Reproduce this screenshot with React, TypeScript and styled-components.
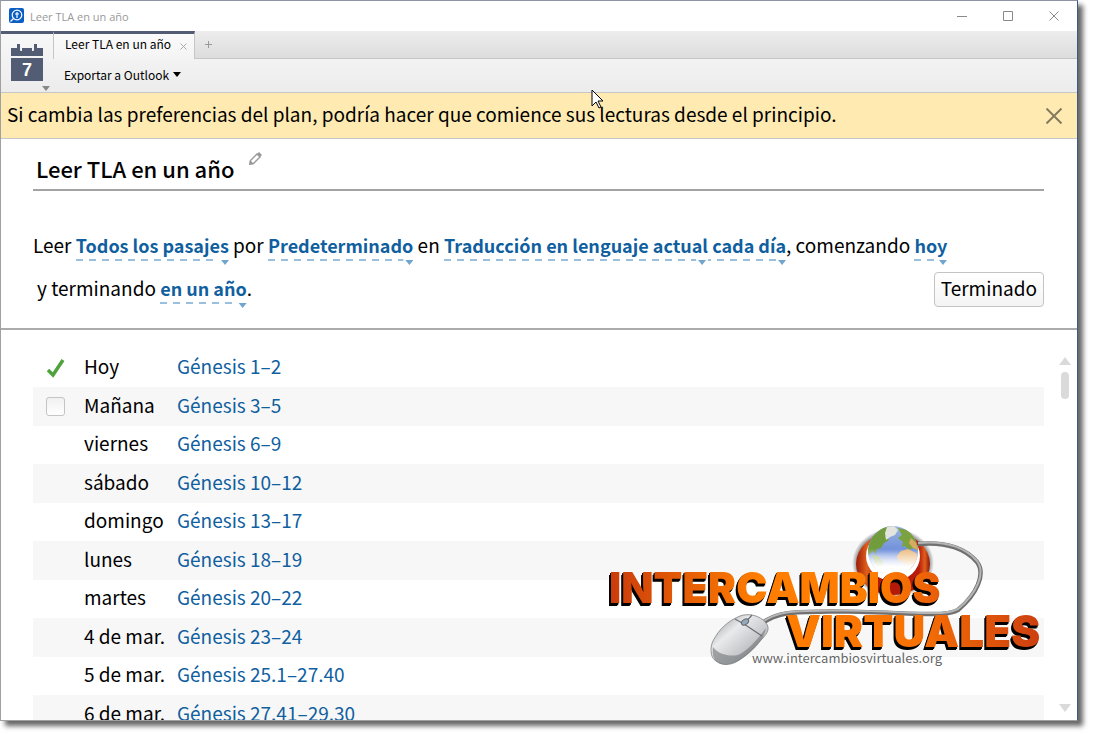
import React from "react";
import styled, { createGlobalStyle, css } from "styled-components";

const Global = createGlobalStyle`
  *, *::before, *::after { box-sizing: border-box; }
  body { margin: 0; background: #fff; color: #000; font-family: "Noto Sans CJK SC", "Open Sans", sans-serif; font-size: 19px; }
  button { font: inherit; color: inherit; border: 0; padding: 0; background: none; cursor: pointer; }
  svg { display: block; }
`;

const Desktop = styled.div`
  height: 100vh;
  padding: 0 15px 15px 0;
  overflow: hidden;
`;

const Shade = styled.div`
  height: 100%;
  box-shadow: 5px 5px 5px rgba(0, 0, 0, 0.6);
`;

const Window = styled.div`
  position: relative;
  display: flex;
  flex-direction: column;
  height: 100%;
  border: 1px solid #a0a0a0;
  border-top-color: #8d93a2;
  border-right-color: #3c5a88;
  background: #fff;
  overflow: hidden;
`;

const TitleBar = styled.header`
  display: flex;
  align-items: center;
  flex: none;
  height: 30px;
  padding: 0 7px 0 8px;
  gap: 5px;
  font-family: "Open Sans", sans-serif;
  font-size: 11px;
  color: #999;
`;

const WindowName = styled.span`
  flex: 1;
`;

const WindowButtons = styled.div`
  display: flex;
  gap: 14px;
`;

const WindowButton = styled.button`
  display: grid;
  place-items: center;
  width: 32px;
  height: 28px;
  color: #8a8a8a;
`;

const Chrome = styled.div`
  display: grid;
  grid-template-columns: 52px 1fr;
  flex: none;
  height: 62px;
  border-bottom: 1px solid #c6c6c6;
  background: linear-gradient(#f8f8f8, #ececec);
`;

const PanelMenu = styled.button`
  display: flex;
  flex-direction: column;
  align-items: flex-end;
  gap: 4px;
  padding: 10px 3px 0 0;
  border-top: 3px solid #525d75;
`;

const ChromeRows = styled.div`
  display: grid;
  grid-template-rows: 28px 1fr;
`;

const TabStrip = styled.div`
  display: flex;
  background: linear-gradient(#ededed, #dcdcdc);
`;

const Tab = styled.div`
  display: flex;
  align-items: center;
  justify-content: space-between;
  width: 142px;
  padding: 0 7px 5px 11px;
  border: solid #c6c6c6;
  border-width: 0 1px;
  border-top: 3px solid #525d75;
  background: linear-gradient(#fafafa, #f4f4f4);
  font-size: 12px;
  line-height: 20px;
`;

const TabClose = styled.button`
  padding-top: 4px;
`;

const TabRest = styled.div`
  display: flex;
  align-items: center;
  flex: 1;
  padding-left: 10px;
  border-bottom: 1px solid #c6c6c6;
`;

const Toolbar = styled.div`
  display: flex;
  align-items: center;
  padding: 0 0 2px 11px;
`;

const ToolButton = styled.button`
  display: flex;
  align-items: center;
  gap: 4px;
  font-size: 12px;
`;

const Banner = styled.div`
  display: flex;
  align-items: center;
  justify-content: space-between;
  flex: none;
  height: 46px;
  padding: 0 15px 0 6px;
  border-bottom: 1px solid #c6c6c6;
  background: #ffebb2;
`;

const BannerText = styled.span`
  padding-bottom: 4px;
  line-height: 28px;
`;

const Settings = styled.section`
  flex: none;
  height: 191px;
  padding: 0 33px 0 32px;
  border-bottom: 2px solid #ababab;
`;

const PlanHeader = styled.div`
  display: flex;
  height: 52px;
  padding: 11px 3px 0;
  gap: 14px;
  border-bottom: 2px solid #a3a3a3;
`;

const PlanTitle = styled.h1`
  margin: 0;
  font-size: 22px;
  line-height: 36px;
  font-weight: 500;
`;

const Pencil = styled.button`
  align-self: flex-start;
  padding-top: 2px;
`;

const Sentence = styled.p<{ $lead?: boolean }>`
  display: flex;
  align-items: baseline;
  margin: 0;
  padding-bottom: 4px;
  line-height: 28px;
  white-space: pre;
  ${(p) => p.$lead && css`padding: 40px 0 0;`}
`;

const Footer = styled.div`
  display: flex;
  align-items: center;
  justify-content: space-between;
  padding: 13px 0 0 4px;
`;

const Choice = styled.button`
  position: relative;
  color: #105f9f;
  font-size: 18px;
  font-weight: 700;
  line-height: 28px;
`;

const ChoiceLine = styled.svg`
  position: absolute;
  left: 0;
  bottom: -6px;
  width: 100%;
  height: 6px;
`;

const DoneButton = styled.button`
  height: 35px;
  padding: 0 6px;
  border: 1px solid #c4c4c4;
  border-radius: 4px;
  background: linear-gradient(#fff, #f4f4f4);
  line-height: 28px;
  padding-bottom: 3px;
`;

const Body = styled.main`
  display: flex;
  flex: 1;
  min-height: 0;
  overflow: hidden;
`;

const Readings = styled.div`
  flex: 1;
  padding: 19px 0 0 32px;
  overflow: hidden;
`;

const Table = styled.table`
  width: 100%;
  border-collapse: collapse;
  line-height: 28px;
  font-variant-numeric: oldstyle-nums;
`;

const Row = styled.tr`
  height: 38px;
  &:nth-child(even) { height: 39px; background: #f7f7f7; }
`;

const Cell = styled.td<{ $w?: number }>`
  padding: 0 0 4px;
  white-space: nowrap;
  ${(p) => p.$w && css`width: ${p.$w}px;`}
`;

const TickCell = styled(Cell)`
  padding: 1px 0 0;
`;

const Tick = styled.label`
  display: grid;
  width: 20px;
  margin-left: 13px;
  > * { grid-area: 1 / 1; }
`;

const TickBox = styled.input`
  appearance: none;
  width: 19px;
  height: 19px;
  margin: 0;
  border: 1px solid #c4c4c4;
  border-radius: 3px;
  background: linear-gradient(#f0f0f0, #fff);
  &:checked { border-color: transparent; background: none; }
  & + svg { visibility: hidden; pointer-events: none; }
  &:checked + svg { visibility: visible; }
`;

const Passage = styled.a`
  color: #105f9f;
  text-decoration: none;
`;

const Scrollbar = styled.div`
  display: flex;
  flex-direction: column;
  align-items: center;
  width: 33px;
  flex: none;
  padding: 27px 0 8px 8px;
  gap: 7px;
`;

const Thumb = styled.div`
  width: 8px;
  height: 27px;
  margin-bottom: auto;
  border-radius: 4px;
  background: #dadada;
`;

const Watermark = styled.svg`
  position: absolute;
  right: 32px;
  bottom: 49px;
  width: 440px;
  height: 150px;
  pointer-events: none;
`;

const Lettering = styled.g`
  font-family: Inter, sans-serif;
  font-weight: 900;
  filter: drop-shadow(-1px 1px 0 #000) drop-shadow(-1px 2px 0 #000);
`;

const Pointer = styled.svg`
  position: absolute;
  left: 590px;
  top: 88px;
  pointer-events: none;
`;

const Down = ({ fill = "#000" }: { fill?: string }) => (
  <svg width="8" height="5" viewBox="0 0 8 5"><path d="M0 0h8L4 5z" fill={fill} /></svg>
);

const Cross = ({ size, stroke, width = 1 }: { size: number; stroke: string; width?: number }) => (
  <svg width={size} height={size} viewBox={`0 0 ${size} ${size}`}>
    <path d={`M.5 .5L${size - 0.5} ${size - 0.5}M${size - 0.5} .5L.5 ${size - 0.5}`} stroke={stroke} strokeWidth={width} />
  </svg>
);

const Pick = ({ children, split }: { children: string; split?: boolean }) => (
  <Choice type="button">
    {children}
    <ChoiceLine>
      <line x1="0" x2="100%" y1="1" y2="1" stroke="#7bacd2" strokeWidth="1.3" strokeDasharray="7 6" />
      <svg x="100%" overflow="visible"><path d="M-10 0h12v5h-12z" fill="#fff" /><path d="M-8 1h8l-4 5z" fill="#6fa5ce" /></svg>
      {split && <svg x="100%" overflow="visible"><path d="M-90 0h12v5h-12z" fill="#fff" /><path d="M-88 1h8l-4 5z" fill="#6fa5ce" /></svg>}
    </ChoiceLine>
  </Choice>
);

const readings: [string, string][] = [
  ["Hoy", "Génesis 1–2"],
  ["Mañana", "Génesis 3–5"],
  ["viernes", "Génesis 6–9"],
  ["sábado", "Génesis 10–12"],
  ["domingo", "Génesis 13–17"],
  ["lunes", "Génesis 18–19"],
  ["martes", "Génesis 20–22"],
  ["4 de mar.", "Génesis 23–24"],
  ["5 de mar.", "Génesis 25.1–27.40"],
  ["6 de mar.", "Génesis 27.41–29.30"],
];

const Logo = () => (
  <Watermark viewBox="605 522 440 150" role="img" aria-label="Intercambios Virtuales">
    <defs>
      <linearGradient id="fire1" x1="0" x2="1"><stop offset="0" stopColor="#c93c0c" /><stop offset=".45" stopColor="#ff7d00" /><stop offset=".8" stopColor="#ff7d00" /><stop offset="1" stopColor="#e85c08" /></linearGradient>
      <linearGradient id="fire2" x1="0" x2="1"><stop offset="0" stopColor="#ff7d00" /><stop offset=".5" stopColor="#f97204" /><stop offset="1" stopColor="#cc3f10" /></linearGradient>
      <linearGradient id="ring" x1="0" x2="1"><stop offset="0" stopColor="#9c1b08" /><stop offset=".15" stopColor="#e0601c" /><stop offset=".3" stopColor="#b01808" /><stop offset=".85" stopColor="#b81c0a" /><stop offset=".93" stopColor="#e0601c" /><stop offset="1" stopColor="#8d1206" /></linearGradient>
      <linearGradient id="sea" x1="0" y1="0" x2="0" y2="1"><stop offset="0" stopColor="#9db6dc" /><stop offset=".5" stopColor="#6f8fdc" /><stop offset="1" stopColor="#fff" /></linearGradient>
      <linearGradient id="haze" x1="0" y1="0" x2="0" y2="1"><stop offset=".45" stopColor="#fff" stopOpacity="0" /><stop offset=".82" stopColor="#fff" /></linearGradient>
      <linearGradient id="shell" x1="0" y1="0" x2="1" y2="1"><stop offset="0" stopColor="#8f9092" /><stop offset=".35" stopColor="#e9eaec" /><stop offset=".65" stopColor="#c3c5c8" /><stop offset="1" stopColor="#77797c" /></linearGradient>
      <radialGradient id="glow"><stop offset=".85" stopColor="#000" stopOpacity=".5" /><stop offset="1" stopColor="#000" stopOpacity="0" /></radialGradient>
      <clipPath id="globe"><circle cx="893" cy="552" r="25" /></clipPath>
    </defs>
    <ellipse cx="893" cy="564" rx="41" ry="35" fill="url(#glow)" />
    <ellipse cx="893" cy="565" rx="37" ry="31" fill="url(#ring)" />
    <ellipse cx="893" cy="557" rx="27" ry="25" fill="#fff" />
    <circle cx="893" cy="552" r="25" fill="url(#sea)" />
    <g clipPath="url(#globe)">
      <path d="M867 552l5-14 11-10 6-2-2 4 2 5-4 3 4 3-5 3-3 5-4 1-1 5-3-3-4 4z" fill="#719c3c" />
      <path d="M887 528l7-1 4 4-3 5-5 2-4 3-1-7z" fill="#e4e4df" />
      <path d="M898 529l10 2 9 10 3 12-7-4-4 2-4-4-3 1 1-5-5-4 4-3z" fill="#7ba23e" />
      <path d="M911 539l5 5 2 7-5-2-4-5z" fill="#d9ab62" />
      <path d="M897 557l4-5 7-2 8 4 3 6-8 11-6-2-2-6-5-1z" fill="#ebba7b" />
      <path d="M872 556l6 1 5 6-2 7-5-4z" fill="#9fba6a" />
      <circle cx="893" cy="552" r="25" fill="url(#haze)" />
    </g>
    <path d="M918 545c30-3 49 6 59 18 9 12 0 32-19 48-10 5-24 4-38 4-50-2-100-4-130-1-15 2-22 6-29 11" fill="none" stroke="#707070" strokeWidth="4.500" />
    <path d="M918 544c30-3 49 6 59 18 9 12 0 32-19 48-10 5-24 4-38 4-50-2-100-4-130-1-15 2-22 6-29 11" fill="none" stroke="#b5b5b5" strokeWidth="2" />
    <path d="M740 617c8-3 20-1 26 7 4 5 2 10-4 16-8 9-17 18-26 23-6 3-14 4-20-1-6-3-6-14-3-20 6-12 15-20 27-25z" fill="url(#shell)" stroke="#7d7f82" strokeWidth=".8" />
    <path d="M713 648c5 7 16 10 25 8 9-4 19-15 28-27-2 14-19 29-30 34-7 3-15 4-20-1-3-3-4-8-3-14z" fill="#727477" opacity=".6" />
    <path d="M735 620l9 5 18 12M744 625l8-9" fill="none" stroke="#6b6e72" strokeWidth="1.2" />
    <ellipse cx="745" cy="623" rx="4" ry="2.5" transform="rotate(-35 745 623)" fill="#94a8bc" stroke="#626569" />
    <Lettering>
      <text x="609" y="604" fontSize="42" fill="url(#fire1)">INTERCAMBIOS</text>
      <text x="786" y="648" fontSize="44" fill="url(#fire2)">VIRTUALES</text>
    </Lettering>
    <text x="752" y="664" fontFamily="'Noto Sans CJK SC', sans-serif" fontSize="13" fill="#666">www.intercambiosvirtuales.org</text>
  </Watermark>
);

export default function App() {
  return (
    <>
      <Global />
      <Desktop>
        <Shade>
          <Window>
            <TitleBar>
              <svg width="16" height="16" viewBox="0 0 16 16">
                <rect x="0" y="0" width="15" height="15" rx="2" fill="#0b5fc4" />
                <circle cx="8" cy="7" r="4.8" fill="none" stroke="#fff" strokeWidth="1.2" />
                <path d="M8 4v6M6 6h4M4.500 10.500L1.500 13.500" stroke="#fff" strokeWidth="1.200" />
              </svg>
              <WindowName>Leer TLA en un año</WindowName>
              <WindowButtons>
                <WindowButton aria-label="Minimizar"><svg width="10" height="10"><path d="M0 5.500h10" stroke="currentColor" /></svg></WindowButton>
                <WindowButton aria-label="Maximizar"><svg width="10" height="10"><path d="M.5 .5h9v9h-9z" stroke="currentColor" fill="none" /></svg></WindowButton>
                <WindowButton aria-label="Cerrar"><Cross size={10} stroke="currentColor" /></WindowButton>
              </WindowButtons>
            </TitleBar>
            <Chrome>
              <PanelMenu aria-label="Menú del panel">
                <svg width="39" height="38" viewBox="0 0 39 38">
                  <path d="M0 4h6V0h3v6q0 1 1 1h1V4h10v3h1q1 0 1-1V0h3v4h6v8H0z" fill="#525d75" />
                  <path d="M0 14h32v23H0z" fill="#525d75" />
                  <text x="16" y="32" textAnchor="middle" fontFamily="Liberation Sans, sans-serif" fontWeight="700" fontSize="18" fill="#fff">7</text>
                </svg>
                <Down fill="#888" />
              </PanelMenu>
              <ChromeRows>
                <TabStrip>
                  <Tab>Leer TLA en un año<TabClose aria-label="Cerrar pestaña"><Cross size={7} stroke="#aaa" /></TabClose></Tab>
                  <TabRest>
                    <button aria-label="Nueva pestaña"><svg width="7" height="7"><path d="M0 3.500h7M3.500 0v7" stroke="#999" /></svg></button>
                  </TabRest>
                </TabStrip>
                <Toolbar><ToolButton>Exportar a Outlook<Down /></ToolButton></Toolbar>
              </ChromeRows>
            </Chrome>
            <Banner role="status">
              <BannerText>Si cambia las preferencias del plan, podría hacer que comience sus lecturas desde el principio.</BannerText>
              <button aria-label="Cerrar aviso"><Cross size={16} stroke="#857a5d" width={2} /></button>
            </Banner>
            <Settings>
              <PlanHeader>
                <PlanTitle>Leer TLA en un año</PlanTitle>
                <Pencil aria-label="Cambiar nombre">
                  <svg width="13" height="13" viewBox="0 0 13 13"><path d="M1.500 8.500L8 2l3 3-6.500 6.500-3.500.500z" fill="#fff" stroke="#999" strokeWidth="1.400" /><path d="M8 2l2-2 3 3-2 2zM0 13l1-5 4 4z" fill="#999" /></svg>
                </Pencil>
              </PlanHeader>
              <Sentence $lead>Leer <Pick>Todos los pasajes</Pick> por <Pick>Predeterminado</Pick> en <Pick split>Traducción en lenguaje actual cada día</Pick>, comenzando <Pick>hoy</Pick></Sentence>
              <Footer>
                <Sentence>y terminando <Pick>en un año</Pick>.</Sentence>
                <DoneButton>Terminado</DoneButton>
              </Footer>
            </Settings>
            <Body>
              <Readings>
                <Table>
                  <tbody>
                    {readings.map(([day, passage], i) => (
                      <Row key={day}>
                        <TickCell $w={51}>
                          {i < 2 && (
                            <Tick>
                              <TickBox type="checkbox" defaultChecked={i === 0} aria-label={day} />
                              <svg width="20" height="20" viewBox="0 0 20 20"><path d="M2 11l5 5L17 1" fill="none" stroke="#4fa33d" strokeWidth="3.500" /></svg>
                            </Tick>
                          )}
                        </TickCell>
                        <Cell $w={93}>{day}</Cell>
                        <Cell><Passage href="#">{passage}</Passage></Cell>
                      </Row>
                    ))}
                  </tbody>
                </Table>
              </Readings>
              <Scrollbar>
                <svg width="12" height="8"><path d="M0 8L6 0l6 8z" fill="#dadada" /></svg>
                <Thumb />
                <svg width="12" height="8"><path d="M0 0h12L6 8z" fill="#dadada" /></svg>
              </Scrollbar>
            </Body>
            <Logo />
            <Pointer width="13" height="20" viewBox="0 0 13 20"><path d="M1 1v16l4-4 3 6 2-1-3-6h5z" fill="#fff" stroke="#000" /></Pointer>
          </Window>
        </Shade>
      </Desktop>
    </>
  );
}
